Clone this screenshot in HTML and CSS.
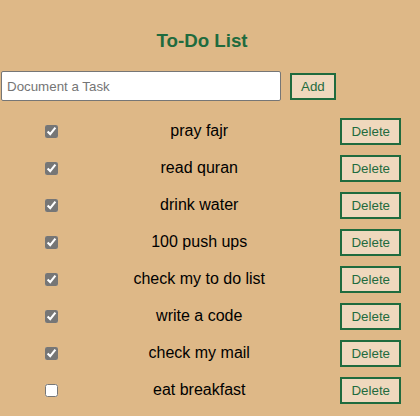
FILE: index.html
```html
<!DOCTYPE html>
<html lang="en">
<head>
<meta charset="utf-8">
<title>To-Do List</title>
<link rel="stylesheet" href="styles.css">
</head>
<body>
<div class="app">
  <h3 class="title">To-Do List</h3>
  <div class="entry">
    <input class="task-input" type="text" placeholder="Document a Task">
    <button class="btn">Add</button>
  </div>
  <ul class="list">
    <li class="item"><input class="check" type="checkbox" checked><span class="label">pray fajr</span><button class="btn">Delete</button></li>
    <li class="item"><input class="check" type="checkbox" checked><span class="label">read quran</span><button class="btn">Delete</button></li>
    <li class="item"><input class="check" type="checkbox" checked><span class="label">drink water</span><button class="btn">Delete</button></li>
    <li class="item"><input class="check" type="checkbox" checked><span class="label">100 push ups</span><button class="btn">Delete</button></li>
    <li class="item"><input class="check" type="checkbox" checked><span class="label">check my to do list</span><button class="btn">Delete</button></li>
    <li class="item"><input class="check" type="checkbox" checked><span class="label">write a code</span><button class="btn">Delete</button></li>
    <li class="item"><input class="check" type="checkbox" checked><span class="label">check my mail</span><button class="btn">Delete</button></li>
    <li class="item"><input class="check" type="checkbox"><span class="label">eat breakfast</span><button class="btn">Delete</button></li>
  </ul>
</div>
</body>
</html>
```
FILE: styles.css
```css
html, body {
  margin: 0;
  padding: 0;
  background: #DEB887;
  font-family: "Liberation Sans", Arial, sans-serif;
}
.app {
  width: 420px;
  padding-top: 30px;
}
.title {
  margin: 0;
  width: 404px;
  text-align: center;
  font-size: 18.72px;
  line-height: 22px;
  font-weight: bold;
  color: #1f6b3e;
}
.entry {
  display: flex;
  align-items: center;
  gap: 9px;
  margin-top: 19px;
  padding-left: 1px;
}
.task-input {
  box-sizing: border-box;
  width: 280px;
  height: 30px;
  margin: 0;
  padding: 0 5px;
  border: 1.5px solid #767676;
  border-radius: 2px;
  background: #fff;
  font-family: "Liberation Sans", Arial, sans-serif;
  font-size: 13.33px;
  color: #222;
}
.task-input::placeholder {
  color: #757575;
}
.btn {
  box-sizing: border-box;
  height: 27px;
  margin: 0;
  padding: 0 9px;
  border: 2px solid #1f6b3e;
  background: #EFD8BD;
  color: #1f6b3e;
  font-family: "Liberation Sans", Arial, sans-serif;
  font-size: 13.33px;
}
.list {
  list-style: none;
  margin: 12px 0 0;
  padding: 0;
}
.item {
  display: flex;
  align-items: center;
  height: 37px;
  padding: 0 19px 0 45px;
}
.check {
  width: 13px;
  height: 13px;
  margin: 0;
  accent-color: #767676;
}
.label {
  flex: 1;
  padding-bottom: 2px;
  text-align: center;
  font-size: 16px;
  color: #000;
}
```
